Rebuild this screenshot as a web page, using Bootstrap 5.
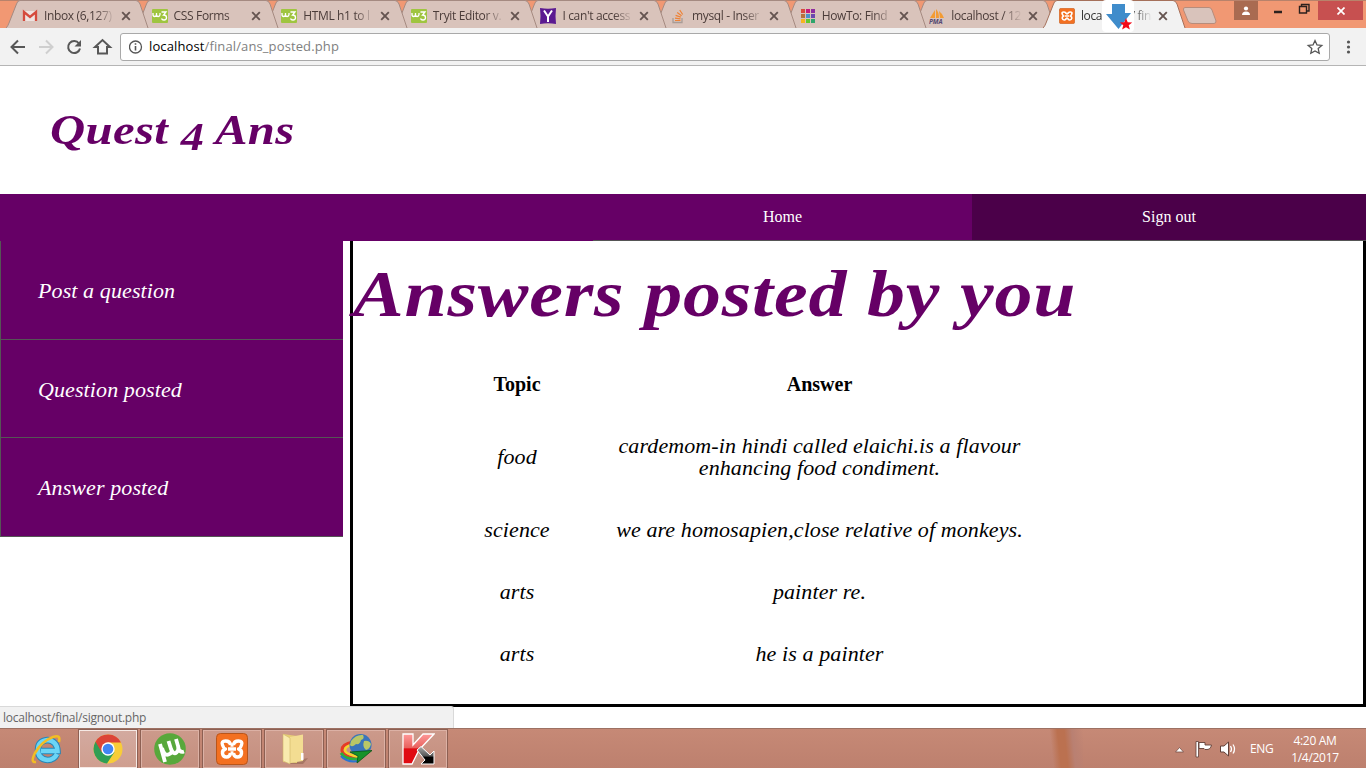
<!DOCTYPE html>
<html lang="en">
<head>
<meta charset="utf-8">
<title>Quest 4 Ans</title>
<meta name="viewport" content="width=device-width, initial-scale=1">
<link href="https://cdn.jsdelivr.net/npm/bootstrap@5.3.0/dist/css/bootstrap.min.css" rel="stylesheet">
<style>
body{width:1366px;height:768px;overflow:hidden;background:#fff;color:#000;font-family:"Open Sans",sans-serif}
svg{display:block;flex:none}
/* browser chrome */
.tabstrip{height:28px;background:#f19873;padding-left:6px;border-top:1px solid #b8826b}
.btab{width:143px;margin-right:-13.4px;height:28px;flex:none;font-size:12px;letter-spacing:-.35px;color:#4b3c39}
.btab .shape{position:absolute;left:0;top:-1px;fill:#d9c3bb;stroke:#a58a81}
.btab .inner{position:relative;height:28px;padding-left:16px;padding-top:1px}
.btab .ttl{width:74px;margin-left:6px;white-space:nowrap;-webkit-mask-image:linear-gradient(90deg,#000 70%,transparent 96%)}
.btab .cls{margin-left:3px}
.btab.on{color:#333}
.btab.on .shape{fill:#f2f2f2;stroke:#a5705a}
.toolbar{height:38px;background:#f2f2f2;border-bottom:1px solid #b5b5b5;border-top:1px solid #f2f2f2}
.omni{width:1210px;height:28px;border:1px solid #a9a9a9;border-radius:3px;background:#fff;font-size:13px;letter-spacing:.12px;color:#808080}
.dl{left:1102px;top:-1px;z-index:20}
.userbtn{width:24px;height:19px;background:#a96b51;margin-left:16px}
.closebtn{width:45px;height:19px;background:#c75050}
.wbtn{width:28px;height:19px}
/* page */
.site{font-family:"Liberation Serif",serif}
.brand-row{height:128px;padding-left:50px}
.wide{display:inline-block;transform-origin:0 50%;white-space:nowrap;font-weight:bold;font-style:italic;color:#606;line-height:1}
.logo-txt{font-size:42px;transform:scaleX(1.16);letter-spacing:.3px}
.logo-txt span{font-size:40px;position:relative;top:6px}
.mainnav{height:47px;background:#606;padding-left:593px;font-size:16px}
.mainnav a{height:47px;color:#fff;text-decoration:none;border-bottom:1px solid #555}
.mainnav .hm{width:379px}
.mainnav .so{width:394px;background:#4b0049}
.side{width:343px;border-left:1px solid #555}
.side a{height:99px;background:#606;color:#fff;font-style:italic;font-size:22px;letter-spacing:.1px;padding-left:37px;padding-top:1px;text-decoration:none;border-bottom:1px solid #555}
.side a:nth-child(2){height:98px}
.panel{width:1016px;height:466px;margin-left:7px;border:3px solid #000;border-top:0}
.panel h1{height:112px;margin:0}
.head-txt{font-size:66px;transform:scaleX(1.15);letter-spacing:.7px;margin-top:20px}
.answers{width:605px;margin-left:91px;line-height:22px;text-align:center;font-size:22px;font-style:italic;letter-spacing:.1px}
.answers td,.answers th{padding:20px 0;vertical-align:middle;border:0}
.answers td:last-child{padding:20px 24px}
.answers th{font-size:20px;font-style:normal;text-align:center;letter-spacing:0}
.statusrow{height:21px}
.status{width:454px;height:22px;top:706px;left:0;background:#f1f1f1;border:1px solid #d9d9d9;border-left:0;border-bottom:0;border-top-right-radius:3px;font-size:12px;letter-spacing:-.25px;color:#666;padding-left:3px}
/* taskbar */
.taskbar{height:40px;background:linear-gradient(#c68976,#bd806e);border-top:1px solid #9d7163;color:#fff;font-size:12px}
.ie{width:78px;padding-left:15px}
.tbtn{width:60px;height:40px;margin-right:2px;border:1px solid #8d6053;box-shadow:inset 0 0 0 1px #dcb1a5;background:linear-gradient(#cc9a8b,#c48e7e)}
.tbtn.on{background:linear-gradient(#d3aaa0,#cf9e8f);box-shadow:inset 0 0 0 1px #f6e9e5}
.streak{width:34px;margin-left:599px;background:linear-gradient(84deg,transparent 12%,#bb7150 32%,#bb7150 50%,#b98072 70%,transparent)}
.clock{line-height:17px;letter-spacing:-.3px}
</style>
</head>
<body class="d-flex flex-column">
<svg width="0" height="0" class="position-absolute">
<symbol id="tab" viewBox="0 0 143 28"><path d="M0 28 Q2 26 3 23L10.500 4Q11.500 .5 14 .5H130Q132.500 .5 134 4L142 28"/></symbol>
<symbol id="x" viewBox="0 0 10 10"><path d="M1.200 1.200 8.800 8.800M8.800 1.200 1.200 8.800" stroke="#655450" stroke-width="1.900"/></symbol>
<symbol id="w3" viewBox="0 0 16 16"><rect y="1" width="16" height="14" rx="1" fill="#9fc540"/><path d="M1 5v1.500q0 2 1.700 2T4.500 6.500V5M4.500 6.500q0 2 1.700 2T8 6.500V5M9.500 4H14L11.500 7q3 0 3 2.500T12 12q-2 0-2.500-1.500" fill="none" stroke="#fff" stroke-width="1.300"/></symbol>
<symbol id="xampp" viewBox="0 0 32 32"><rect x=".5" y=".5" width="31" height="31" rx="4" fill="#f37021" stroke="#b9551a"/><path d="M12 16H20M14.500 12Q14 8 9.500 8T6.500 12 9.500 16Q6 17 6.500 20.500T10.500 24 14.500 20M17.500 12Q18 8 22.500 8T25.500 12 22.500 16Q26 17 25.500 20.500T21.500 24 17.500 20M14.500 12h3M14.500 20h3" fill="none" stroke="#fff" stroke-width="3.400" stroke-linejoin="round"/></symbol>
</svg>

<header class="tabstrip d-flex flex-none position-relative">
<div class="btab position-relative" style="z-index:9"><svg class="shape" width="143" height="28"><use href="#tab"/></svg><div class="inner d-flex align-items-center"><svg width="16" height="16" viewBox="0 0 16 16"><path d="M1 3h14v10H1z" fill="#eee4e1"/><path d="M2 13V4l6 5 6-5v9" fill="none" stroke="#d54b3d" stroke-width="2.300"/></svg><span class="ttl">Inbox (6,127)</span><svg class="cls" width="10" height="10"><use href="#x"/></svg></div></div>
<div class="btab position-relative" style="z-index:8"><svg class="shape" width="143" height="28"><use href="#tab"/></svg><div class="inner d-flex align-items-center"><svg width="16" height="16"><use href="#w3"/></svg><span class="ttl">CSS Forms</span><svg class="cls" width="10" height="10"><use href="#x"/></svg></div></div>
<div class="btab position-relative" style="z-index:7"><svg class="shape" width="143" height="28"><use href="#tab"/></svg><div class="inner d-flex align-items-center"><svg width="16" height="16"><use href="#w3"/></svg><span class="ttl">HTML h1 to l</span><svg class="cls" width="10" height="10"><use href="#x"/></svg></div></div>
<div class="btab position-relative" style="z-index:6"><svg class="shape" width="143" height="28"><use href="#tab"/></svg><div class="inner d-flex align-items-center"><svg width="16" height="16"><use href="#w3"/></svg><span class="ttl">Tryit Editor v.</span><svg class="cls" width="10" height="10"><use href="#x"/></svg></div></div>
<div class="btab position-relative" style="z-index:5"><svg class="shape" width="143" height="28"><use href="#tab"/></svg><div class="inner d-flex align-items-center"><svg width="16" height="16" viewBox="0 0 16 16"><path d="M0 0Q8 1.500 16 0 15 8 16 16 8 14.500 0 16 1 8 0 0" fill="#5b1a91"/><path d="M4 2.500 8 8.500 12 2.500M8 8v6" fill="none" stroke="#fff" stroke-width="2"/></svg><span class="ttl">I can't access</span><svg class="cls" width="10" height="10"><use href="#x"/></svg></div></div>
<div class="btab position-relative" style="z-index:4"><svg class="shape" width="143" height="28"><use href="#tab"/></svg><div class="inner d-flex align-items-center"><svg width="16" height="16" viewBox="0 0 16 16" fill="none"><path d="M3 10v4.500h9V10" stroke="#a99c96" stroke-width="1.300"/><path d="M5 12.500h5.500M5 10.200l5.500.7M5.600 7.400l5.200 1.700M7.200 4.500l4.400 3.300M9.700 2l3 4.500" stroke="#ef8236" stroke-width="1.200"/></svg><span class="ttl">mysql - Inser</span><svg class="cls" width="10" height="10"><use href="#x"/></svg></div></div>
<div class="btab position-relative" style="z-index:3"><svg class="shape" width="143" height="28"><use href="#tab"/></svg><div class="inner d-flex align-items-center"><svg width="16" height="16" viewBox="0 0 16 16"><path fill="#d9483c" d="M1 1h4v4H1z"/><path fill="#c51c7c" d="M6 1h4v4H6z"/><path fill="#8e2c9f" d="M11 1h4v4h-4z"/><path fill="#b6723d" d="M1 6h4v4H1z"/><path fill="#4a91cc" d="M6 6h4v4H6z"/><path fill="#6b49ae" d="M11 6h4v4h-4z"/><path fill="#f6b51e" d="M1 11h4v4H1z"/><path fill="#62c82e" d="M6 11h4v4H6z"/><path fill="#2fa56c" d="M11 11h4v4h-4z"/></svg><span class="ttl">HowTo: Find</span><svg class="cls" width="10" height="10"><use href="#x"/></svg></div></div>
<div class="btab position-relative" style="z-index:2"><svg class="shape" width="143" height="28"><use href="#tab"/></svg><div class="inner d-flex align-items-center"><svg width="16" height="16" viewBox="0 0 16 16"><path d="M1 10 6 2v8zM7 1q3 3 3 9H7zM10 3q4 3 5 7h-4z" fill="#f39b32"/><text x="0" y="15.500" font-size="6.500" font-style="italic" font-weight="bold" fill="#554a73" letter-spacing="-.1">PMA</text></svg><span class="ttl">localhost / 12</span><svg class="cls" width="10" height="10"><use href="#x"/></svg></div></div>
<div class="btab on position-relative" style="z-index:10"><svg class="shape" width="143" height="28"><use href="#tab"/></svg><div class="inner d-flex align-items-center"><svg width="16" height="16"><use href="#xampp"/></svg><span class="ttl">localhost / fina</span><svg class="cls" width="10" height="10"><use href="#x"/></svg></div></div>
<svg style="margin-left:10px;margin-top:5px" width="36" height="19"><path d="M3 1.500H27Q29 1.500 30 4L34 15Q34 17.500 32 17.500H10Q7 17.500 6 15L1.500 4Q1 1.500 3 1.500Z" fill="#d9c3bb" stroke="#b78c7b"/></svg>
<div class="userbtn d-flex justify-content-center align-items-center"><svg width="10" height="10"><circle cx="5" cy="2.500" r="2.100" fill="#fff"/><path d="M1 9q0-3.500 4-3.500T9 9z" fill="#fff"/></svg></div>
<div class="wbtn ms-1"><svg width="28" height="19"><path d="M12 11h8" stroke="#2c211e" stroke-width="2.500"/></svg></div>
<div class="wbtn"><svg width="28" height="19"><path d="M9.500 5.500h7v6.500h-7zM11.500 5V3.500h7.500V10H17" fill="none" stroke="#2c211e" stroke-width="1.400"/></svg></div>
<div class="closebtn d-flex justify-content-center align-items-center"><svg width="8" height="8"><path d="M.5.5l7 7M7.500.5l-7 7" stroke="#fff" stroke-width="1.700"/></svg></div>
<svg class="dl position-absolute" width="32" height="32"><rect width="32" height="32" rx="4" fill="#fff"/><path d="M10 4h13v9h6L16.500 29 4 14h6z" fill="#3f8ccb"/><path d="M24 18l1.700 4.200 4.500.2-3.500 2.900 1.200 4.300L24 27.200l-3.900 2.400 1.200-4.300-3.500-2.900 4.500-.2z" fill="#f30917"/></svg>
</header>

<div class="toolbar d-flex align-items-center">
<svg width="120" height="36" fill="none" stroke="#575757" stroke-width="2"><path d="M25 18H12M18 11.500 11.500 18 18 24.500"/><path d="M39 18H52M46 11.500 52.500 18 46 24.500" stroke="#cfcfcf"/><path d="M79 14.500A6 6 0 1 0 80 19.500"/><path d="M81 11v6.500h-6.500z" fill="#575757" stroke="none"/><path d="M98 18h-3l7.500-7 7.500 7h-3v6.500h-9z"/></svg>
<div class="omni d-flex align-items-center"><svg class="ms-2" width="14" height="14" fill="none" stroke="#555" stroke-width="1.300"><circle cx="6.500" cy="7" r="6"/><path d="M6.500 6v4.500M6.500 3.300v1.500" stroke-width="1.600"/></svg><span class="flex-grow-1" style="margin-left:6px"><span class="text-black">localhost</span>/final/ans_posted.php</span><svg class="me-1" width="20" height="20"><path d="M10 3.500l2 4.400 4.800.5-3.600 3.200 1 4.700L10 13.900l-4.200 2.400 1-4.700-3.600-3.200 4.800-.5z" fill="none" stroke="#555" stroke-width="1.300"/></svg></div>
<svg width="36" height="20"><g fill="#555"><circle cx="18.500" cy="5" r="1.600"/><circle cx="18.500" cy="10" r="1.600"/><circle cx="18.500" cy="15" r="1.600"/></g></svg>
</div>

<main class="site">
<div class="brand-row d-flex align-items-center"><div class="wide logo-txt">Quest <span>4</span> Ans</div></div>
<nav class="mainnav d-flex"><a class="hm d-flex align-items-center justify-content-center" href="#">Home</a><a class="so d-flex align-items-center justify-content-center" href="#">Sign out</a></nav>
<div class="d-flex align-items-start">
<nav class="side d-flex flex-column"><a class="d-flex align-items-center" href="#">Post a question</a><a class="d-flex align-items-center" href="#">Question posted</a><a class="d-flex align-items-center" href="#">Answer posted</a></nav>
<section class="panel">
<h1><span class="wide head-txt">Answers posted by you</span></h1>
<table class="answers">
<colgroup><col style="width:146px"><col></colgroup>
<tr><th>Topic</th><th>Answer</th></tr>
<tr><td>food</td><td>cardemom-in hindi called elaichi.is a flavour<br>enhancing food condiment.</td></tr>
<tr><td>science</td><td>we are homosapien,close relative of monkeys.</td></tr>
<tr><td>arts</td><td>painter re.</td></tr>
<tr><td>arts</td><td>he is a painter</td></tr>
</table>
</section>
</div>
<div class="statusrow"></div>
</main>
<div class="status position-absolute d-flex align-items-center">localhost/final/signout.php</div>

<footer class="taskbar d-flex">
<div class="ie d-flex align-items-center justify-content-center"><svg width="32" height="32" viewBox="0 0 32 32" fill="none"><path d="M26 21Q23 27 16.500 27 7 26 7 17T16.500 7Q26 8 26.500 18H10" stroke="#2687b8" stroke-width="6.500"/><path d="M26 21Q23 27 16.500 27 7 26 7 17T16.500 7Q26 8 26.500 18H10" stroke="#6bd5f6" stroke-width="4.500"/><path d="M28 9Q30 1 22 4 11 8 4 20-1 30 5 29" stroke="#f2bd24" stroke-width="2.500"/></svg></div>
<div class="tbtn on d-flex align-items-center justify-content-center"><svg width="30" height="30" viewBox="0 0 30 30"><circle cx="15" cy="15" r="14.500" fill="#f8cd39"/><path d="M15 15 2.500 7.700A14.500 14.500 0 0 0 14 29.500L21.500 18z" fill="#2f9e55"/><path d="M2.500 7.700A14.500 14.500 0 0 1 28 8.500H15L8.500 18z" fill="#dc4437"/><circle cx="15" cy="15" r="6.700" fill="#fff"/><circle cx="15" cy="15" r="5.300" fill="#4285f4"/></svg></div>
<div class="tbtn d-flex align-items-center justify-content-center"><svg width="32" height="32" viewBox="0 0 32 32"><circle cx="16" cy="16" r="15.800" fill="#58a83b"/><path d="M6 11 11 29M8 15Q10 23 14.500 21.500T17 16L14.500 8M17 16Q19.500 22 22.500 19.500T24 13L22 6M24 15q2 5 6 3.500" fill="none" stroke="#fff" stroke-width="3.800"/></svg></div>
<div class="tbtn d-flex align-items-center justify-content-center"><svg width="32" height="32"><use href="#xampp"/></svg></div>
<div class="tbtn d-flex align-items-center justify-content-center"><svg width="32" height="32" viewBox="0 0 32 32"><path d="M21 27l9-2-5 6H11z" fill="#8a5d48" opacity=".5"/><path d="M5 1 19 3V30L5 29z" fill="#e6cd75"/><path d="M12 4 25 1.500V28L12 30z" fill="#f3dd92"/><path d="M5 1l7 4v26l-7-3z" fill="#f9eaae" stroke="#d2b766" stroke-width=".6"/><path d="M23 20h2.500v7H23z" fill="#fff"/></svg></div>
<div class="tbtn d-flex align-items-center justify-content-center"><svg width="34" height="32" viewBox="0 0 34 32"><path d="M14 9Q3 11 3 17t16 9" fill="none" stroke="#e63a25" stroke-width="3"/><path d="M14 12Q6 13 6 17t14 7" fill="none" stroke="#f4d52b" stroke-width="2.500"/><path d="M2 20Q6 27 20 26" fill="none" stroke="#2cae3c" stroke-width="3"/><path d="M2 23Q8 30 20 28" fill="none" stroke="#2d74cf" stroke-width="2"/><circle cx="21.500" cy="12" r="11" fill="#3975bb"/><path d="M12 8q5-7 12-6 2 4-2 5-1 5-5 4-4 4-6 1zM25 8q5-1 7 3-1 5-5 6-4-3-2-9" fill="#b9c767"/><path d="M11 19 33 17.500 18 30 19 23z" fill="#16922a" stroke="#075616" stroke-width=".8"/></svg></div>
<div class="tbtn d-flex align-items-center justify-content-center"><svg width="34" height="34" viewBox="0 0 34 34"><defs><linearGradient id="kr" x2="0" y2="1"><stop stop-color="#f99"/><stop offset=".45" stop-color="#e8635f"/><stop offset=".5" stop-color="#e00b12"/><stop offset="1" stop-color="#e00b12"/></linearGradient><linearGradient id="kb" x2="0" y2="1"><stop stop-color="#aaa"/><stop offset=".55" stop-color="#555"/><stop offset=".6" stop-color="#000"/></linearGradient></defs><path d="M2 2H12V13L22 2H33L18 18 11 32H2z" fill="url(#kr)" stroke="#fff" stroke-width="1.300"/><path d="M16 18 20 14.500 29 23 33 19V32H20L24 28z" fill="url(#kb)" stroke="#fff" stroke-width="1"/></svg></div>
<div class="streak"></div>
<div class="d-flex align-items-center ms-auto">
<svg width="70" height="24"><path d="M.5 15 4.500 10.500 8.500 15z" fill="#fff" stroke="#765147" stroke-width=".8"/><path d="M21 4.500h2.500V20H21z" fill="#fff" stroke="#603f37" stroke-width=".8"/><path d="M24 5.500h6V8h6.500q-1 5-5.500 4.500-1 .5-2-1H24z" fill="#fff" stroke="#603f37" stroke-width=".9"/><path d="M45.500 9H49L53.500 5V19L49 15H45.500z" fill="#fff" stroke="#603f37"/><path d="M55.500 9q2 3 0 6M58 7.500q3 4.500 0 9" stroke="#fff" stroke-width="1.300" fill="none"/></svg>
<span style="width:46px;padding-left:5px;letter-spacing:-.3px">ENG</span>
<div class="clock text-center" style="width:48px;margin:0 27px 0 0">4:20 AM<br>1/4/2017</div>
</div>
</footer>
<script src="https://cdn.jsdelivr.net/npm/bootstrap@5.3.0/dist/js/bootstrap.bundle.min.js"></script>
</body>
</html>
